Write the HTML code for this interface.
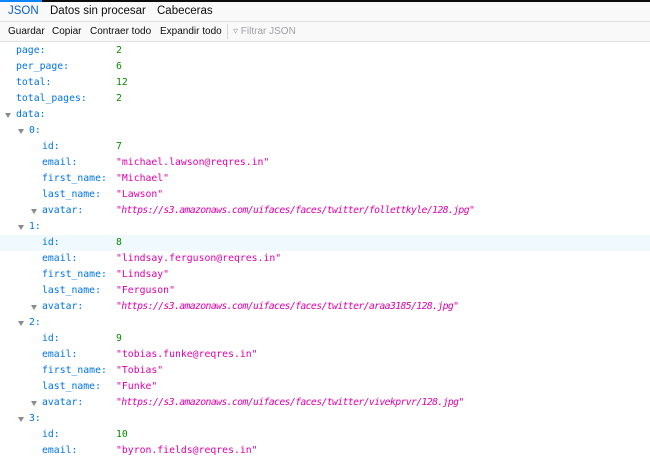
<!DOCTYPE html>
<html><head><meta charset="utf-8"><style>
body{margin:0;width:650px;height:452px;overflow:hidden;background:#fff;font-family:"Liberation Sans",sans-serif;}
.top{height:2px;background:#0c0c0d;position:relative}
.top i{position:absolute;left:0;top:0;width:42px;height:2px;background:#0a84ff}
.tabs{height:19px;background:#f9f9fa;border-bottom:1px solid #e0e0e2;font-size:11.5px;color:#0c0c0d;position:relative}
.tabs span{position:absolute;top:3px}
.tb{height:19px;background:#f9f9fa;border-bottom:1px solid #e0e0e2;font-size:10px;color:#0c0c0d;position:relative}
.tb span{position:absolute;top:4px}
.rows{position:relative;top:1px;font-family:"DejaVu Sans Mono","Liberation Mono",monospace;font-size:9.8px}
.r{position:absolute;left:0;width:650px;height:16px;line-height:16px}
.k{position:absolute;color:#0074e8}
.v{position:absolute;left:116px}
.n{color:#058b00}.s{color:#dd00a9}.u{color:#dd00a9;font-style:italic;letter-spacing:-0.63px}
.t{position:absolute;width:0;height:0;border-left:3.5px solid transparent;border-right:3.5px solid transparent;border-top:5px solid #8a8a8f;top:6px}
</style></head><body>
<div class="top"><i></i></div>
<div class="tabs"><span style="left:8px;color:#0a5fc4">JSON</span><span style="left:50px">Datos sin procesar</span><span style="left:157px">Cabeceras</span></div>
<div class="tb"><span style="left:8px">Guardar</span><span style="left:52px">Copiar</span><span style="left:90px">Contraer todo</span><span style="left:160px">Expandir todo</span><span style="left:227px;top:2px;width:1px;height:15px;background:#d7d7db"></span><span style="left:233px;color:#a0a0a5">&#9663; Filtrar JSON</span></div>
<div class="rows">
<div class="r" style="top:0"><span class="k" style="left:16px">page:</span><span class="v n">2</span></div>
<div class="r" style="top:16px"><span class="k" style="left:16px">per_page:</span><span class="v n">6</span></div>
<div class="r" style="top:32px"><span class="k" style="left:16px">total:</span><span class="v n">12</span></div>
<div class="r" style="top:48px"><span class="k" style="left:16px">total_pages:</span><span class="v n">2</span></div>
<div class="r" style="top:64px"><i class="t" style="left:5px"></i><span class="k" style="left:16px">data:</span></div>

<div class="r" style="top:80px"><i class="t" style="left:18px"></i><span class="k" style="left:29px">0:</span></div>
<div class="r" style="top:96px"><span class="k" style="left:42px">id:</span><span class="v n">7</span></div>
<div class="r" style="top:112px"><span class="k" style="left:42px">email:</span><span class="v s">"michael.lawson@reqres.in"</span></div>
<div class="r" style="top:128px"><span class="k" style="left:42px">first_name:</span><span class="v s">"Michael"</span></div>
<div class="r" style="top:144px"><span class="k" style="left:42px">last_name:</span><span class="v s">"Lawson"</span></div>
<div class="r" style="top:160px"><i class="t" style="left:31px"></i><span class="k" style="left:42px">avatar:</span><span class="v u">"https://s3.amazonaws.com/uifaces/faces/twitter/follettkyle/128.jpg"</span></div>

<div class="r" style="top:176px"><i class="t" style="left:18px"></i><span class="k" style="left:29px">1:</span></div>
<div class="r" style="top:192px;background:#f0f9fe"><span class="k" style="left:42px">id:</span><span class="v n">8</span></div>
<div class="r" style="top:208px"><span class="k" style="left:42px">email:</span><span class="v s">"lindsay.ferguson@reqres.in"</span></div>
<div class="r" style="top:224px"><span class="k" style="left:42px">first_name:</span><span class="v s">"Lindsay"</span></div>
<div class="r" style="top:240px"><span class="k" style="left:42px">last_name:</span><span class="v s">"Ferguson"</span></div>
<div class="r" style="top:256px"><i class="t" style="left:31px"></i><span class="k" style="left:42px">avatar:</span><span class="v u">"https://s3.amazonaws.com/uifaces/faces/twitter/araa3185/128.jpg"</span></div>

<div class="r" style="top:272px"><i class="t" style="left:18px"></i><span class="k" style="left:29px">2:</span></div>
<div class="r" style="top:288px"><span class="k" style="left:42px">id:</span><span class="v n">9</span></div>
<div class="r" style="top:304px"><span class="k" style="left:42px">email:</span><span class="v s">"tobias.funke@reqres.in"</span></div>
<div class="r" style="top:320px"><span class="k" style="left:42px">first_name:</span><span class="v s">"Tobias"</span></div>
<div class="r" style="top:336px"><span class="k" style="left:42px">last_name:</span><span class="v s">"Funke"</span></div>
<div class="r" style="top:352px"><i class="t" style="left:31px"></i><span class="k" style="left:42px">avatar:</span><span class="v u">"https://s3.amazonaws.com/uifaces/faces/twitter/vivekprvr/128.jpg"</span></div>

<div class="r" style="top:368px"><i class="t" style="left:18px"></i><span class="k" style="left:29px">3:</span></div>
<div class="r" style="top:384px"><span class="k" style="left:42px">id:</span><span class="v n">10</span></div>
<div class="r" style="top:400px"><span class="k" style="left:42px">email:</span><span class="v s">"byron.fields@reqres.in"</span></div>
</div>
</body></html>
